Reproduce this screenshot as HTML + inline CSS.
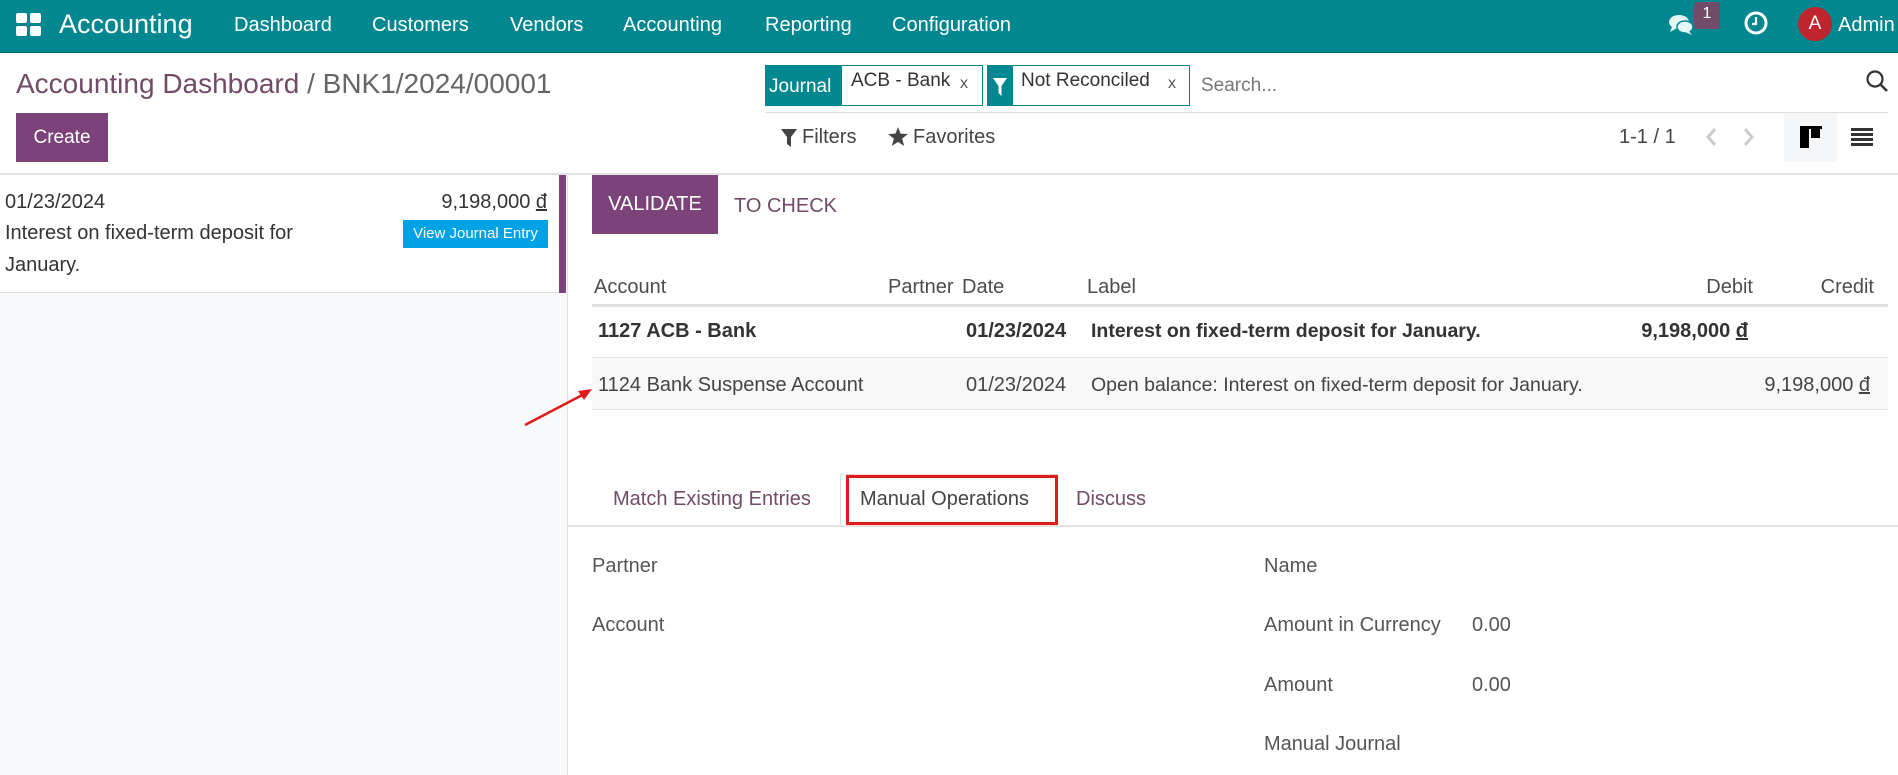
<!DOCTYPE html>
<html><head><meta charset="utf-8"><style>
*{margin:0;padding:0;box-sizing:border-box}
body{width:1898px;height:763px;overflow:hidden;background:#fff;font-family:"Liberation Sans",sans-serif;color:#4c4c4c;position:relative;font-size:18px}
.a{position:absolute;white-space:nowrap}
.nav{left:0;top:0;width:1898px;height:53px;background:#01878f;border-bottom:1px solid #016a70}
.nav .m{color:#fff;font-size:20px;top:14px}
.pur{color:#714b67}
</style></head><body>
<div class="a nav">
  <svg class="a" style="left:16px;top:13px" width="26" height="24" viewBox="0 0 26 24"><rect x="0" y="0" width="11" height="10" rx="2" fill="#fff"/><rect x="14" y="0" width="11" height="10" rx="2" fill="#fff"/><rect x="0" y="13" width="11" height="10" rx="2" fill="#fff"/><rect x="14" y="13" width="11" height="10" rx="2" fill="#fff"/></svg>
  <div class="a m" style="left:59px;top:9px;font-size:27px">Accounting</div>
  <div class="a m" style="left:234px">Dashboard</div>
  <div class="a m" style="left:372px">Customers</div>
  <div class="a m" style="left:510px">Vendors</div>
  <div class="a m" style="left:623px">Accounting</div>
  <div class="a m" style="left:765px">Reporting</div>
  <div class="a m" style="left:892px">Configuration</div>
  <svg class="a" style="left:1668px;top:13px" width="28" height="24" viewBox="0 0 28 24"><ellipse cx="11" cy="9" rx="10" ry="7" fill="#e6f6f6"/><path d="M4 14 L2 19 L9 15Z" fill="#e6f6f6"/><ellipse cx="17" cy="14" rx="8" ry="6" fill="#e6f6f6" stroke="#01878f" stroke-width="1.5"/><path d="M21 18 L24 22 L17 19Z" fill="#e6f6f6"/></svg>
  <div class="a" style="left:1694px;top:2px;width:26px;height:27px;background:#714b67;border-radius:3px;color:#fff;font-size:16px;text-align:center;line-height:24px">1</div>
  <svg class="a" style="left:1743px;top:10px" width="26" height="26" viewBox="0 0 26 26"><circle cx="13" cy="13" r="10" fill="none" stroke="#fff" stroke-width="3"/><path d="M13 7 V14 H9" fill="none" stroke="#fff" stroke-width="2.2"/></svg>
  <div class="a" style="left:1798px;top:7px;width:34px;height:34px;border-radius:50%;background:#c0242c;color:#fff;font-size:19px;text-align:center;line-height:34px">A</div>
  <div class="a m" style="left:1838px">Admin</div>
</div>

<div class="a pur" style="left:16px;top:68px;font-size:28px">Accounting Dashboard <span style="color:#666">/ BNK1/2024/00001</span></div>
<div class="a" style="left:16px;top:113px;width:92px;height:49px;background:#7b4379;color:#fff;font-size:19px;text-align:center;line-height:49px">Create</div>

<div class="a" style="left:765px;top:65px;width:218px;height:41px;border:1px solid #01878f"></div>
<div class="a" style="left:765px;top:65px;width:77px;height:41px;background:#01878f;color:#fff;font-size:19px;line-height:43px;padding-left:4px">Journal</div>
<div class="a" style="left:851px;top:70px;font-size:19px;color:#333">ACB - Bank</div>
<div class="a" style="left:960px;top:75px;font-size:16px;color:#555">x</div>
<div class="a" style="left:987px;top:65px;width:203px;height:41px;border:1px solid #01878f"></div>
<div class="a" style="left:987px;top:65px;width:26px;height:41px;background:#01878f"></div>
<svg class="a" style="left:992px;top:77px" width="16" height="20" viewBox="0 0 16 20"><path d="M1 1 H15 L9.5 9 V19 L6.5 16 V9Z" fill="#fff"/></svg>
<div class="a" style="left:1021px;top:70px;font-size:19px;color:#333">Not Reconciled</div>
<div class="a" style="left:1168px;top:75px;font-size:16px;color:#555">x</div>
<div class="a" style="left:1201px;top:75px;font-size:19px;color:#777">Search...</div>
<svg class="a" style="left:1865px;top:69px" width="24" height="24" viewBox="0 0 24 24"><circle cx="10" cy="10" r="7.5" fill="none" stroke="#333" stroke-width="2.2"/><path d="M15.5 15.5 L22 22" stroke="#333" stroke-width="2.5"/></svg>
<div class="a" style="left:765px;top:112px;width:1123px;height:1px;background:#ddd"></div>

<svg class="a" style="left:781px;top:129px" width="16" height="18" viewBox="0 0 16 18"><path d="M0 0 H16 L10 8 V18 L6 15 V8Z" fill="#444"/></svg>
<div class="a" style="left:802px;top:126px;font-size:20px;color:#444">Filters</div>
<svg class="a" style="left:888px;top:127px" width="20" height="19" viewBox="0 0 24 23"><path d="M12 0 L15 8 L24 8.5 L17 14 L19.5 23 L12 18 L4.5 23 L7 14 L0 8.5 L9 8Z" fill="#444"/></svg>
<div class="a" style="left:913px;top:126px;font-size:20px;color:#444">Favorites</div>
<div class="a" style="left:1619px;top:126px;font-size:20px;color:#444">1-1 / 1</div>
<svg class="a" style="left:1702px;top:127px" width="60" height="20" viewBox="0 0 60 20"><path d="M13 2 L6 10 L13 18" fill="none" stroke="#ccc" stroke-width="3"/><path d="M43 2 L50 10 L43 18" fill="none" stroke="#ccc" stroke-width="3"/></svg>
<div class="a" style="left:1784px;top:113px;width:53px;height:49px;background:#f5f6f7"></div>
<svg class="a" style="left:1800px;top:126px" width="22" height="22" viewBox="0 0 22 22"><rect x="0" y="0" width="22" height="3" fill="#000"/><rect x="0" y="0" width="9" height="22" fill="#000"/><rect x="11" y="0" width="9" height="12" fill="#000"/></svg>
<svg class="a" style="left:1851px;top:128px" width="22" height="19" viewBox="0 0 22 19"><rect y="0" width="22" height="3" fill="#333"/><rect y="5" width="22" height="3" fill="#333"/><rect y="10" width="22" height="3" fill="#333"/><rect y="15" width="22" height="3" fill="#333"/></svg>

<div class="a" style="left:0;top:173px;width:1898px;height:2px;background:#e2e2e2"></div>

<div class="a" style="left:0;top:175px;width:568px;height:600px;background:#f8f9fa;border-right:1px solid #e2e2e2"></div>
<div class="a" style="left:0;top:175px;width:566px;height:118px;background:#fff;border-bottom:1px solid #ddd"></div>
<div class="a" style="left:559px;top:175px;width:7px;height:118px;background:#7b4379"></div>
<div class="a" style="left:5px;top:191px;font-size:20px;color:#333">01/23/2024</div>
<div class="a" style="left:420px;top:191px;font-size:20px;color:#333;width:127px;text-align:right">9,198,000 <u>đ</u></div>
<div class="a" style="left:403px;top:220px;width:145px;height:28px;background:#00a2e6;color:#fff;font-size:15px;line-height:28px;text-align:center">View Journal Entry</div>
<div class="a" style="left:5px;top:222px;font-size:20px;color:#333">Interest on fixed-term deposit for</div>
<div class="a" style="left:5px;top:254px;font-size:20px;color:#333">January.</div>

<div class="a" style="left:592px;top:175px;width:126px;height:59px;background:#7b4379;color:#fff;font-size:20px;text-align:center;line-height:59px">VALIDATE</div>
<div class="a pur" style="left:734px;top:195px;font-size:20px">TO CHECK</div>

<div class="a" style="left:594px;top:276px;font-size:20px">Account</div>
<div class="a" style="left:888px;top:276px;font-size:20px">Partner</div>
<div class="a" style="left:962px;top:276px;font-size:20px">Date</div>
<div class="a" style="left:1087px;top:276px;font-size:20px">Label</div>
<div class="a" style="left:1653px;top:276px;font-size:20px;width:100px;text-align:right">Debit</div>
<div class="a" style="left:1774px;top:276px;font-size:20px;width:100px;text-align:right">Credit</div>
<div class="a" style="left:592px;top:304px;width:1296px;height:3px;background:#e2e2e2"></div>

<div class="a" style="left:598px;top:320px;font-size:20px;font-weight:bold;color:#333">1127 ACB - Bank</div>
<div class="a" style="left:966px;top:320px;font-size:20px;font-weight:bold;color:#333">01/23/2024</div>
<div class="a" style="left:1091px;top:320px;font-size:19.5px;font-weight:bold;color:#333">Interest on fixed-term deposit for January.</div>
<div class="a" style="left:1580px;top:320px;font-size:20px;font-weight:bold;color:#333;width:168px;text-align:right">9,198,000 <u>đ</u></div>
<div class="a" style="left:592px;top:357px;width:1296px;height:53px;background:#f8f8f8;border-top:1px solid #e2e2e2;border-bottom:1px solid #e2e2e2"></div>
<div class="a" style="left:598px;top:374px;font-size:20px;color:#444">1124 Bank Suspense Account</div>
<div class="a" style="left:966px;top:374px;font-size:20px;color:#444">01/23/2024</div>
<div class="a" style="left:1091px;top:374px;font-size:19.5px;color:#444">Open balance: Interest on fixed-term deposit for January.</div>
<div class="a" style="left:1700px;top:374px;font-size:20px;color:#444;width:170px;text-align:right">9,198,000 <u>đ</u></div>

<svg class="a" style="left:520px;top:380px" width="80" height="50" viewBox="0 0 80 50"><path d="M5 45 L68 12" stroke="#e01b1b" stroke-width="2.5"/><path d="M72 9 L58 11 L64 20Z" fill="#e01b1b"/></svg>

<div class="a pur" style="left:613px;top:488px;font-size:20px">Match Existing Entries</div>
<div class="a" style="left:840px;top:474px;width:218px;height:52px;border:1px solid #ddd;border-bottom:none;background:#fff"></div>
<div class="a" style="left:846px;top:475px;width:212px;height:50px;border:3px solid #e01b1b"></div>
<div class="a" style="left:860px;top:488px;font-size:20px;color:#444">Manual Operations</div>
<div class="a pur" style="left:1076px;top:488px;font-size:20px">Discuss</div>
<div class="a" style="left:568px;top:525px;width:1330px;height:2px;background:#e2e2e2"></div>

<div class="a" style="left:592px;top:555px;font-size:20px;color:#555">Partner</div>
<div class="a" style="left:592px;top:614px;font-size:20px;color:#555">Account</div>
<div class="a" style="left:1264px;top:555px;font-size:20px;color:#555">Name</div>
<div class="a" style="left:1264px;top:614px;font-size:20px;color:#555">Amount in Currency</div>
<div class="a" style="left:1472px;top:614px;font-size:20px;color:#555">0.00</div>
<div class="a" style="left:1264px;top:674px;font-size:20px;color:#555">Amount</div>
<div class="a" style="left:1472px;top:674px;font-size:20px;color:#555">0.00</div>
<div class="a" style="left:1264px;top:733px;font-size:20px;color:#555">Manual Journal</div>
</body></html>
